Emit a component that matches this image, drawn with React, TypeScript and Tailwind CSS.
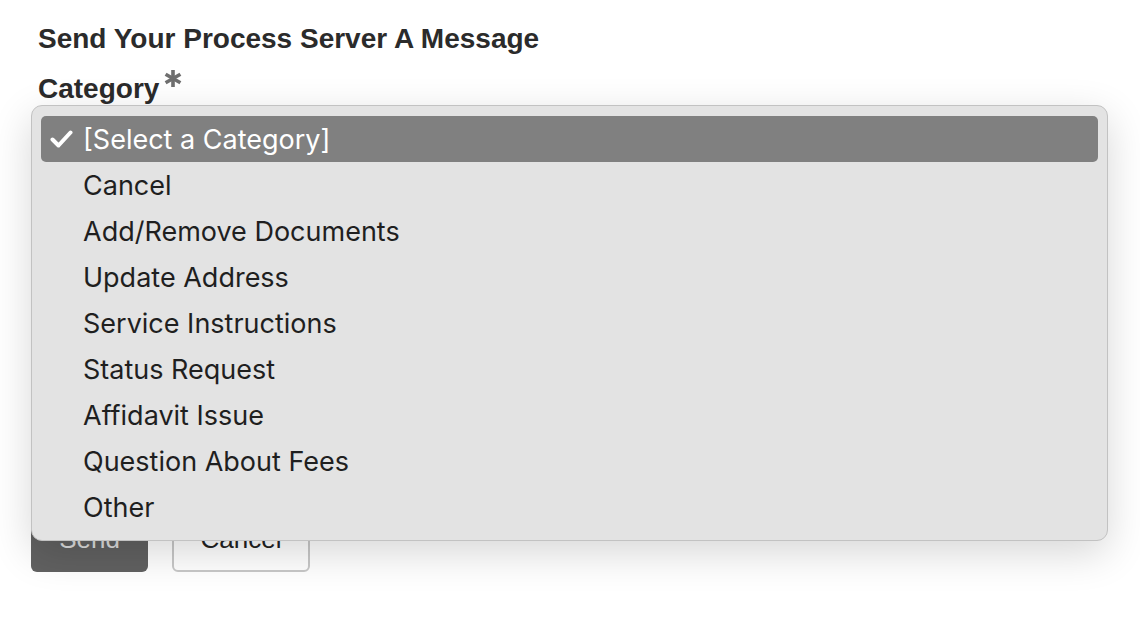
const options = [
  "[Select a Category]",
  "Cancel",
  "Add/Remove Documents",
  "Update Address",
  "Service Instructions",
  "Status Request",
  "Affidavit Issue",
  "Question About Fees",
  "Other",
]

const labelFont = { fontFamily: '"Liberation Sans", Arial, sans-serif' }
const menuFont = { fontFamily: 'Inter, "Liberation Sans", sans-serif' }

function CheckMark() {
  return (
    <svg width="23" height="18" viewBox="0 0 23 18" fill="none">
      <path d="M2.5 9.5 L8.5 15.5 L20.5 2.5" stroke="currentColor" strokeWidth="4" strokeLinecap="round" strokeLinejoin="round" />
    </svg>
  )
}

function Asterisk() {
  return (
    <svg width="18" height="19" viewBox="0 0 18 19" className="text-[#6f6f6f]">
      <g stroke="currentColor" strokeWidth="3.6" strokeLinecap="butt">
        <line x1="9" y1="1" x2="9" y2="18" />
        <line x1="1.6" y1="5.2" x2="16.4" y2="13.8" />
        <line x1="1.6" y1="13.8" x2="16.4" y2="5.2" />
      </g>
    </svg>
  )
}

export default function App() {
  return (
    <div className="min-h-screen bg-white text-[#222]" style={labelFont}>
      <div className="px-[38px] pt-[24px]">
        <h2 className="text-[28px] font-bold leading-[30px] text-[#2b2b2b]">Send Your Process Server A Message</h2>
        <label className="mt-[20px] flex items-start text-[28px] font-bold leading-[30px] text-[#2b2b2b]">
          Category
          <span className="ml-[5px] -mt-[5px]">
            <Asterisk />
          </span>
        </label>

        {/* select and message box, covered by the open menu */}
        <div className="relative mt-[12px]">
          <div className="h-[46px] rounded-[6px] border border-[#c4c4c4] bg-white" />
          <div className="mt-[20px] h-[310px] rounded-[6px] border border-[#c4c4c4] bg-white" />

          <div
            className="absolute left-[-7px] top-[-11px] w-[1077px] rounded-[11px] border border-[#c2c2c2] bg-[#e3e3e3] px-[9px] pt-[10px] pb-[10px] shadow-[0_12px_40px_rgba(0,0,0,0.16)]"
            style={menuFont}
          >
            {options.map((opt, i) => (
              <div
                key={opt}
                className={
                  i === 0
                    ? "flex h-[46px] items-center rounded-[5px] bg-[#808080] text-white"
                    : "flex h-[46px] items-center pt-[1px] text-[#1f1f1f]"
                }
              >
                <span className="flex w-[42px] justify-start pl-[9px]">{i === 0 && <CheckMark />}</span>
                <span className="text-[27px] leading-none">{opt}</span>
              </div>
            ))}
          </div>
        </div>

        <div className="-ml-[7px] mt-[10px] flex gap-[24px]">
          <button className="h-[70px] w-[117px] rounded-[6px] bg-[#616161] pt-[4px] text-[26px] text-[#dcdcdc]">Send</button>
          <button className="h-[70px] w-[138px] rounded-[6px] border-2 border-[#c8c8c8] bg-white pt-[4px] text-[26px] text-[#222]">
            Cancel
          </button>
        </div>
      </div>
    </div>
  )
}
